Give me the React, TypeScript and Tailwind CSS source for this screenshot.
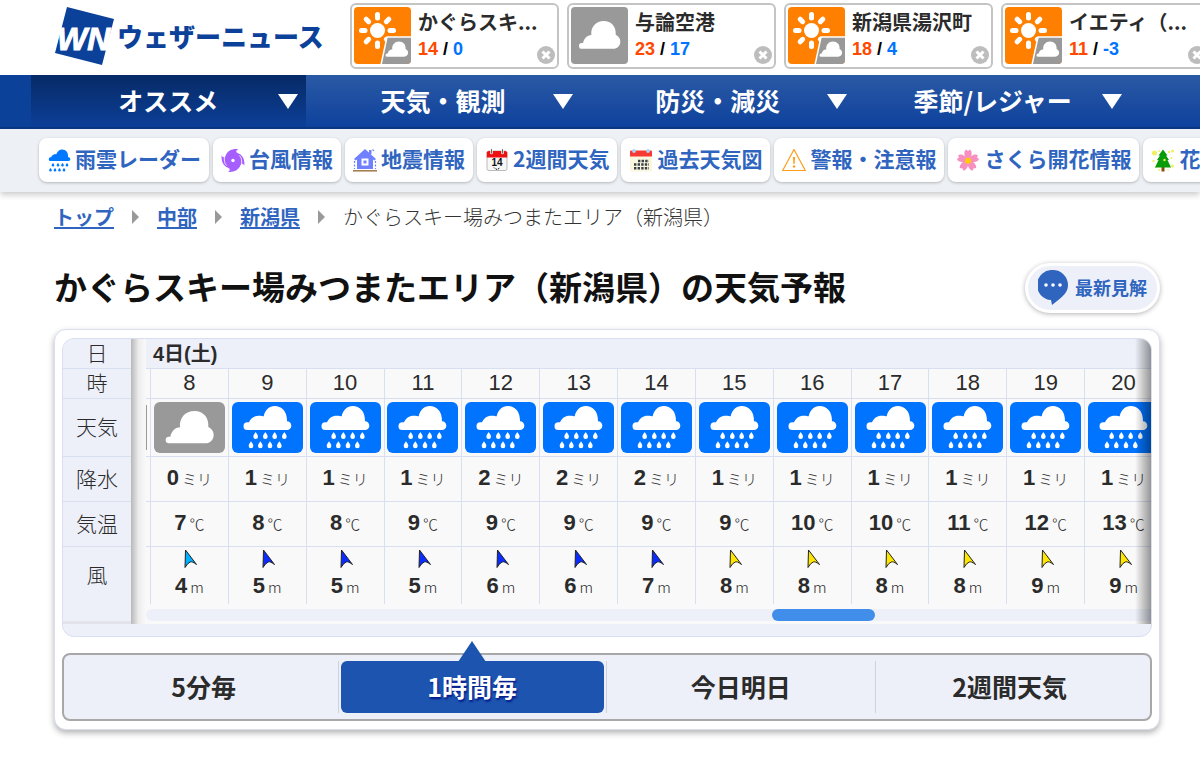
import React from 'react';

type Sky = 'cloud' | 'rain';

interface Hour {
  hour: number;
  sky: Sky;
  rain: number;
  temp: number;
  wind: number;
}

const places = [
  { name: 'かぐらスキ...', high: 14, low: 0, sunny: true },
  { name: '与論空港', high: 23, low: 17, sunny: false },
  { name: '新潟県湯沢町', high: 18, low: 4, sunny: true },
  { name: 'イエティ（...', high: 11, low: -3, sunny: true },
];

const menus = ['オススメ', '天気・観測', '防災・減災', '季節/レジャー'];

const hours: Hour[] = [
  { hour: 8, sky: 'cloud', rain: 0, temp: 7, wind: 4 },
  { hour: 9, sky: 'rain', rain: 1, temp: 8, wind: 5 },
  { hour: 10, sky: 'rain', rain: 1, temp: 8, wind: 5 },
  { hour: 11, sky: 'rain', rain: 1, temp: 9, wind: 5 },
  { hour: 12, sky: 'rain', rain: 2, temp: 9, wind: 6 },
  { hour: 13, sky: 'rain', rain: 2, temp: 9, wind: 6 },
  { hour: 14, sky: 'rain', rain: 2, temp: 9, wind: 7 },
  { hour: 15, sky: 'rain', rain: 1, temp: 9, wind: 8 },
  { hour: 16, sky: 'rain', rain: 1, temp: 10, wind: 8 },
  { hour: 17, sky: 'rain', rain: 1, temp: 10, wind: 8 },
  { hour: 18, sky: 'rain', rain: 1, temp: 11, wind: 8 },
  { hour: 19, sky: 'rain', rain: 1, temp: 12, wind: 9 },
  { hour: 20, sky: 'rain', rain: 1, temp: 13, wind: 9 },
];

const tabs = ['5分毎', '1時間毎', '今日明日', '2週間天気'];

const CLOUD =
  'M10 97A10 10 0 0 1 10 77L14 77C18 60 28 50 43 49C40 20 60 0 86 0C112 0 130 18 128 48C140 54 144 64 144 72C144 86 133 97 119 97Z';
const RAIN_CLOUD =
  'M46 84A11.5 11.5 0 0 1 46 61H51C56 48 68 40 82 41C88 41 92 42 95 43C99 24 112 12 128 12C149 12 166 28 165 58A13 13 0 0 1 165 84Z';
const DROP = 'M0 0C3 5 7 9 7 14A7 7 0 0 1 -7 14C-7 9 -3 5 0 0Z';
const DROPS = [
  [71, 90], [100, 90], [128, 90], [157, 90],
  [57, 118], [85, 118], [114, 118], [142, 118],
];

const Logo: React.FC = () => (
  <svg width="60" height="60" viewBox="0 0 60 60" className="shrink-0">
    <path d="M12 1L59 13L47 59L0 47Z" fill="#0c419a" />
    <text
      x="2"
      y="44"
      fill="#fff"
      stroke="#fff"
      strokeWidth="1"
      fontSize="32"
      fontWeight="bold"
      fontStyle="italic"
      fontFamily="Liberation Sans, sans-serif"
    >
      WN
    </text>
  </svg>
);

const SunCloudIcon: React.FC = () => (
  <svg width="57" height="57" viewBox="0 0 57 57" className="shrink-0 rounded">
    <rect width="57" height="57" fill="#ff8000" />
    <circle cx="23.5" cy="23.5" r="7.5" fill="#fff" />
    {[0, 45, 90, 135, 180, 225, 270, 315].map((a) => (
      <path
        key={a}
        d="M23.5 7.5V11"
        stroke="#fff"
        strokeWidth="5"
        strokeLinecap="round"
        transform={`rotate(${a} 23.5 23.5)`}
      />
    ))}
    <path d="M33 30H58V58H27Z" fill="#999" stroke="#fff" strokeWidth="1.5" />
    <path d={CLOUD} fill="#fff" transform="translate(31.5 34.5) scale(0.157)" />
  </svg>
);

const CloudIcon: React.FC = () => (
  <svg width="57" height="57" viewBox="0 0 57 57" className="shrink-0 rounded">
    <rect width="57" height="57" fill="#999" />
    <path d={CLOUD} fill="#fff" transform="translate(8 14) scale(0.287)" />
  </svg>
);

const SkyIcon: React.FC<{ sky: Sky }> = ({ sky }) => (
  <svg viewBox="0 0 213 153" className="mx-auto block h-[51px] w-[71px] rounded-md">
    {sky === 'cloud' ? (
      <>
        <rect width="213" height="153" fill="#999" />
        <path d={CLOUD} fill="#fff" transform="translate(35 27)" />
      </>
    ) : (
      <>
        <rect width="213" height="153" fill="#0073ff" />
        <path d={RAIN_CLOUD} fill="#fff" />
        {DROPS.map(([x, y]) => (
          <path key={`${x}-${y}`} d={DROP} fill="#fff" transform={`translate(${x} ${y})`} />
        ))}
      </>
    )}
  </svg>
);

const WindArrow: React.FC<{ speed: number }> = ({ speed }) => {
  const fill = speed >= 8 ? '#ffe600' : speed >= 5 ? '#0a2cff' : '#00b0ff';
  return (
    <svg width="18" height="20" viewBox="-4 0 18 20" className="mx-auto block">
      <path
        d="M1.5 1L12.5 15.5Q8 12 6.2 13Q3.5 14 1 18.5Z"
        fill={fill}
        stroke="#222"
        strokeWidth="1"
        strokeLinejoin="round"
      />
    </svg>
  );
};

const RadarIcon = () => (
  <svg width="24" height="24" viewBox="0 0 24 24">
    <path d="M3 13A2 2 0 0 1 3 9.300H4C5 7 7 6 9.500 6C10.500 3 12.500 1.500 15 1.500C19 1.500 21.500 4.500 21 9C24 9.500 24 13 21.500 13Z" fill="#0078ff" />
    {[[6, 15], [11, 15], [15.5, 15], [20, 15], [3.5, 20], [8, 20], [12.500, 20], [17, 20]].map(([x, y]) => (
      <path key={`${x}-${y}`} d="M0 0C1.800 1.800 1.800 3.600 0 3.600S-1.800 1.800 0 0Z" fill="#0078ff" transform={`translate(${x} ${y})`} />
    ))}
  </svg>
);

const TyphoonIcon = () => (
  <svg width="24" height="24" viewBox="0 0 24 24">
    <circle cx="12" cy="12.500" r="9" fill="#a65eff" />
    {[0, 90, 180, 270].map((a) => (
      <path
        key={a}
        d="M5 7C7 2.500 11.500 0.500 17.500 1.200C15.500 1.800 15 2.600 15.500 4.500L12 8Z"
        fill="#a65eff"
        transform={`rotate(${a} 12 12.500)`}
      />
    ))}
    <path d="M3.600 8.500C2.800 12 3.500 15 5.500 17.500M20.400 16.500C21.200 13 20.500 10 18.500 7.500" fill="none" stroke="#fff" strokeWidth="0.800" />
    <circle cx="12" cy="12.500" r="1.700" fill="#fff" />
  </svg>
);

const HouseIcon = () => (
  <svg width="24" height="24" viewBox="0 0 24 24">
    <path d="M12 1L23 11L21.500 12.500L20 11.500V21H4V11.500L2.500 12.500L1 11Z" fill="#7080ff" />
    <path d="M16 2H18.500V6H16Z" fill="#7080ff" />
    <path d="M9.500 11.500H14.500V16.500H9.500Z" fill="#7080ff" stroke="#fff" strokeWidth="2" />
    <path d="M1.500 13V21M22.500 13V21M19.500 1.500L22 4" stroke="#7080ff" strokeWidth="1.200" strokeDasharray="2 1.500" />
    <path d="M0 22.800H24" stroke="#a0764c" strokeWidth="1.500" />
  </svg>
);

const Calendar14Icon = () => (
  <svg width="24" height="24" viewBox="0 0 24 24">
    <rect x="2" y="3" width="20" height="19.500" rx="2" fill="#f7f7f7" stroke="#aaa" strokeWidth="0.800" />
    <path d="M1.800 4.500Q2 3 4 3H20Q22 3 22.200 4.500V9.500H1.800Z" fill="#ee1111" />
    <path d="M6.500 2V5M17.500 2V5" stroke="#fff" strokeWidth="2.600" strokeLinecap="round" />
    <path d="M6.500 1.500V5M17.500 1.500V5" stroke="#666" strokeWidth="1.200" strokeLinecap="round" />
    <text x="12" y="18" textAnchor="middle" fontSize="10" fontWeight="bold" fontFamily="Liberation Sans, sans-serif" fill="#111">
      14
    </text>
    <path d="M9 19.500L10 20.500L12 21.500L14 20.500L15 19.500" fill="none" stroke="#111" strokeWidth="1" strokeDasharray="1.500 0.800" />
  </svg>
);

const PastCalendarIcon = () => (
  <svg width="24" height="24" viewBox="0 0 24 24">
    <rect x="1" y="3" width="22" height="20.500" rx="1" fill="#fbf7df" />
    <path d="M1 8.500V3.500Q1 2.500 2 2.500H22Q23 2.500 23 3.500V8.500Z" fill="#f93a32" />
    <circle cx="5" cy="3" r="1.900" fill="#a9d4ee" />
    <circle cx="19" cy="3" r="1.900" fill="#a9d4ee" />
    <path d="M9 13H20M5 16.500H20M5 20.200H20" stroke="#354047" strokeWidth="2.400" strokeDasharray="2.400 1.200" />
  </svg>
);

const WarningIcon = () => (
  <svg width="24" height="24" viewBox="0 0 24 24">
    <path d="M12 1.500L23.300 22.500H0.700Z" fill="none" stroke="#ff9c1a" strokeWidth="1.200" strokeLinejoin="round" />
    <path d="M10.900 9H13.100L12.600 16H11.400Z" fill="#ff9c1a" />
    <circle cx="12" cy="18.500" r="1.200" fill="#ff9c1a" />
  </svg>
);

const SakuraIcon = () => (
  <svg width="24" height="24" viewBox="0 0 24 24">
    {[0, 72, 144, 216, 288].map((a) => (
      <path
        key={a}
        d="M12 12.500C7 8 8 3 10 1.500L12 3L14 1.500C16 3 17 8 12 12.500Z"
        fill="#f78fc0"
        transform={`rotate(${a} 12 12.500)`}
      />
    ))}
    <circle cx="12" cy="12.800" r="3" fill="#ffcc00" />
  </svg>
);

const TreeIcon = () => (
  <svg width="24" height="24" viewBox="0 0 24 24">
    {[[3.5, 5, 2.5], [8, 3, 1], [18, 4, 1.2], [21.5, 3, 1.5], [2.5, 13, 1.2], [5, 19, 1], [20.500, 10, 1], [21.500, 18, 1.500], [8, 22, 1], [17, 22, 0.800]].map(([x, y, r]) => (
      <circle key={`${x}-${y}`} cx={x} cy={y} r={r} fill="#eef060" />
    ))}
    <path d="M10.500 19H13.500V23.500H10.500Z" fill="#8a4b14" />
    <path d="M12 1.500L16.500 7.500H15L18 12H16.500L20 19.500H4L7.500 12H6L9 7.500H7.500Z" fill="#089c08" />
    <circle cx="13.500" cy="12" r="1.200" fill="#eef060" />
  </svg>
);

const shortcuts = [
  { label: '雨雲レーダー', icon: <RadarIcon /> },
  { label: '台風情報', icon: <TyphoonIcon /> },
  { label: '地震情報', icon: <HouseIcon /> },
  { label: '2週間天気', icon: <Calendar14Icon /> },
  { label: '過去天気図', icon: <PastCalendarIcon /> },
  { label: '警報・注意報', icon: <WarningIcon /> },
  { label: 'さくら開花情報', icon: <SakuraIcon /> },
  { label: '花粉', icon: <TreeIcon /> },
];

const Header: React.FC = () => (
  <header className="flex h-[75px] items-start overflow-hidden bg-white">
    <a href="#" className="flex w-[350px] shrink-0 items-center gap-[2px] pt-[6px] pl-[55px]">
      <Logo />
      <span className="text-[26px] leading-[60px] font-black whitespace-nowrap text-[#0c419a]">ウェザーニュース</span>
    </a>
    <ul className="flex gap-2 pt-[3px]">
      {places.map((p) => (
        <li key={p.name} className="flex h-[66px] w-[209px] shrink-0 gap-[7px] rounded-md border-2 border-[#c4c4c4] p-[2px]">
          {p.sunny ? <SunCloudIcon /> : <CloudIcon />}
          <div className="flex min-w-0 flex-1 flex-col">
            <a href="#" className="text-xl leading-[30px] font-bold whitespace-nowrap text-[#2b2b2b]">{p.name}</a>
            <div className="flex items-start justify-between">
              <p className="font-['Liberation_Sans',sans-serif] text-lg leading-6 font-bold text-black">
                <span className="text-[#ff4800]">{p.high}</span> / <span className="text-[#0073ff]">{p.low}</span>
              </p>
              <button type="button" aria-label="削除" className="mt-[9px] shrink-0">
                <svg width="18" height="18" viewBox="0 0 18 18">
                  <circle cx="9" cy="9" r="9" fill="#bdbdbd" />
                  <path d="M5.500 5.500L12.500 12.500M12.500 5.500L5.500 12.500" stroke="#fff" strokeWidth="3" />
                </svg>
              </button>
            </div>
          </div>
        </li>
      ))}
    </ul>
  </header>
);

const Menu: React.FC = () => (
  <nav className="flex h-[54px] border-b-2 border-[#0a3785] bg-[#0c419a]">
    <div className="ml-[31px] flex flex-1 bg-linear-to-b from-[#2a59a4] to-[#0d419d] pr-[70px]">
      {menus.map((m, i) => (
        <button
          key={m}
          type="button"
          className={`grid flex-1 grid-cols-[1fr_auto_1fr] items-center px-2 text-[25px] font-bold text-white ${
            i === 0 ? 'bg-linear-to-b from-[#072a66] to-[#0c3f98]' : ''
          }`}
        >
          <span />
          <span className="whitespace-nowrap">{m}</span>
          <svg width="20" height="15" viewBox="0 0 20 15" className="justify-self-end">
            <path d="M0 0H20L10 15Z" fill="#fff" />
          </svg>
        </button>
      ))}
    </div>
  </nav>
);

const Shortcuts: React.FC = () => (
  <div className="overflow-hidden bg-[#edf1f5] pt-[9px] pb-[10px] pl-[39px] shadow-[0_3px_6px_rgba(0,0,0,0.2)]">
    <ul className="flex gap-1">
      {shortcuts.map((s) => (
        <li key={s.label} className="shrink-0">
          <a
            href="#"
            className="flex h-11 items-center gap-1 rounded-lg bg-white px-2 text-[21px] font-bold whitespace-nowrap text-[#3065bf] shadow-[0_1px_3px_rgba(0,0,0,0.25)]"
          >
            {s.icon}
            <span className="self-start leading-10">{s.label}</span>
          </a>
        </li>
      ))}
    </ul>
  </div>
);

const Crumbs: React.FC = () => (
  <nav className="flex items-center pt-[10px] text-xl leading-[30px] whitespace-nowrap text-[#333]">
    {['トップ', '中部', '新潟県'].map((c) => (
      <React.Fragment key={c}>
        <a href="#" className="font-bold text-[#3065bf] underline decoration-2 underline-offset-2">{c}</a>
        <svg width="7" height="14" viewBox="0 0 7 14" className="mx-[18px]">
          <path d="M0 0L7 7L0 14Z" fill="#999" />
        </svg>
      </React.Fragment>
    ))}
    <span className="font-light">かぐらスキー場みつまたエリア（新潟県）</span>
  </nav>
);

const rowHead = 'border-b border-[#d8dff0] bg-[#edf0f9] p-0 pb-[3px] text-center text-[21px] leading-6 font-light';
const cell = 'border-b border-l border-[#d8dff0] bg-[#f9f9f9] p-0 text-center';
const edge = 'border-b border-[#d8dff0] bg-[#f9f9f9] p-0';
const value = "font-['Liberation_Sans',sans-serif] text-[22px] leading-6 font-bold";
const unit = 'ml-[3px] text-[15px] leading-6 font-light';

const ForecastTable: React.FC = () => (
  <div className="relative overflow-hidden rounded-xl border border-[#d8dff0] bg-[#edf0f9] pb-3">
    <table className="w-[1099px] table-fixed border-separate border-spacing-0 text-[#2b2b2b]">
      <colgroup>
        <col className="w-[68px]" />
        <col className="w-[15px]" />
        <col className="w-[4px]" />
        {hours.map((h) => (
          <col key={h.hour} />
        ))}
      </colgroup>
      <tbody>
        <tr className="h-[30px]">
          <th scope="row" className={rowHead}>日</th>
          <td rowSpan={7} className="bg-linear-to-r from-[#b8b8b8] via-[#ececec] to-[#f9f9f9] p-0" />
          <th colSpan={14} className="border-b border-[#d8dff0] bg-[#edf0f9] p-0 pl-[7px] text-left font-['Liberation_Sans','Noto_Sans_CJK_JP',sans-serif] text-xl leading-6 font-bold">
            4日(土)
          </th>
        </tr>
        <tr className="h-[30px]">
          <th scope="row" className={rowHead}>時</th>
          <td className={edge} />
          {hours.map((h) => (
            <td key={h.hour} className={`${cell} pb-[2px] font-['Liberation_Sans',sans-serif] text-[22px] leading-6`}>{h.hour}</td>
          ))}
        </tr>
        <tr className="h-[58px]">
          <th scope="row" className={rowHead}>天気</th>
          <td className={edge}>
            <div className="h-[45px] w-px bg-[#999]" />
          </td>
          {hours.map((h) => (
            <td key={h.hour} className={cell}>
              <SkyIcon sky={h.sky} />
            </td>
          ))}
        </tr>
        <tr className="h-[45px]">
          <th scope="row" className={rowHead}>降水</th>
          <td className={edge} />
          {hours.map((h) => (
            <td key={h.hour} className={`${cell} pb-[2px]`}>
              <span className={value}>{h.rain}</span>
              <span className={unit}>ミリ</span>
            </td>
          ))}
        </tr>
        <tr className="h-[45px]">
          <th scope="row" className={rowHead}>気温</th>
          <td className={edge} />
          {hours.map((h) => (
            <td key={h.hour} className={`${cell} pb-[2px]`}>
              <span className={value}>{h.temp}</span>
              <span className={unit}>℃</span>
            </td>
          ))}
        </tr>
        <tr className="h-[57px]">
          <th scope="row" className="bg-[#edf0f9] p-0 pb-[3px] text-center text-[21px] leading-6 font-light">風</th>
          <td className="bg-[#f9f9f9] p-0" />
          {hours.map((h) => (
            <td key={h.hour} className="border-l border-[#d8dff0] bg-[#f9f9f9] p-0 text-center">
              <WindArrow speed={h.wind} />
              <div className="mt-[5px] h-7 leading-6">
                <span className={value}>{h.wind}</span>
                <span className={unit}>m</span>
              </div>
            </td>
          ))}
        </tr>
        <tr className="h-5">
          <td className="border-b-[3px] border-[#e2e4e9] bg-[#edf0f9] p-0" />
          <td colSpan={14} className="bg-[#f9f9f9] p-0">
            <div className="mt-[2px] h-3 rounded-full bg-[#edf0f9]">
              <div className="ml-[61.6%] h-3 w-[103px] rounded-full bg-[#418eea]" />
            </div>
          </td>
        </tr>
      </tbody>
    </table>
    <div className="pointer-events-none absolute top-0 right-0 bottom-3 w-4 bg-linear-to-r from-transparent to-black/40" />
  </div>
);

const RangeTabs: React.FC = () => (
  <div className="mt-4 grid h-[68px] grid-cols-4 rounded-lg border-2 border-[#a8a8a8] bg-[#edf0f9] p-[6px]">
    {tabs.map((t, i) => (
      <div key={t} className={`px-[2px] ${i < 3 ? 'border-r border-[#cdd3de]' : ''}`}>
        <button
          type="button"
          aria-pressed={i === 1}
          className={`relative h-full w-full rounded-md text-[25px] font-bold ${
            i === 1 ? 'bg-[#1d54af] text-white [text-shadow:1px_2px_2px_#001a8c]' : 'text-[#2b2b2b]'
          }`}
        >
          {i === 1 && (
            <svg width="28" height="21" viewBox="0 0 28 21" className="absolute bottom-full left-1/2 -mb-px -translate-x-1/2">
              <path d="M14 0L28 21H0Z" fill="#1d54af" />
            </svg>
          )}
          {t}
        </button>
      </div>
    ))}
  </div>
);

const App: React.FC = () => {
  return (
    <div className="min-h-screen overflow-hidden bg-white font-['Noto_Sans_CJK_JP',sans-serif]">
      <Header />
      <Menu />
      <Shortcuts />
      <main className="pr-10 pl-[54px]">
        <Crumbs />
        <div className="mt-[31px] flex items-start justify-between">
          <h1 className="text-[33px] leading-[46px] font-bold whitespace-nowrap text-[#111]">
            かぐらスキー場みつまたエリア（新潟県）の天気予報
          </h1>
          <a
            href="#"
            className="flex h-[50px] shrink-0 items-center gap-[7px] rounded-full border-[3px] border-white bg-[#edf0f9] px-[10px] text-lg font-bold text-[#3065bf] shadow-[0_1px_5px_rgba(0,0,0,0.3)]"
          >
            <svg width="30" height="36" viewBox="0 0 30 36">
              <path d="M15 0A15 15 0 0 1 30 15C30 22 26 26 14 35L13 30A15 15 0 0 1 15 0Z" fill="#3065bf" />
              <circle cx="8" cy="15" r="1.800" fill="#fff" />
              <circle cx="15" cy="15" r="1.800" fill="#fff" />
              <circle cx="22" cy="15" r="1.800" fill="#fff" />
            </svg>
            <span className="pb-[2px] leading-6 whitespace-nowrap">最新見解</span>
          </a>
        </div>
        <section className="mt-4 rounded-xl border border-[#d8dff0] bg-white px-[7px] py-2 shadow-[0_3px_6px_rgba(0,0,0,0.3)]">
          <ForecastTable />
          <RangeTabs />
        </section>
      </main>
    </div>
  );
};

export default App;
